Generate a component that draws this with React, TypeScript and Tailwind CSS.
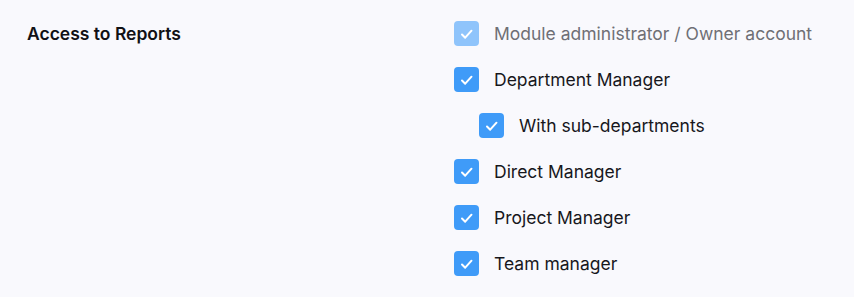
const Check = ({ disabled = false }: { disabled?: boolean }) => (
  <span
    className={`w-[25px] h-[25px] rounded-[4px] flex items-center justify-center shrink-0 ${
      disabled ? "bg-[#8fc4fb]" : "bg-[#3f9bf8]"
    }`}
  >
    <svg viewBox="0 0 24 24" className="w-6 h-6" fill="none" stroke="#ffffff" strokeWidth="2" strokeLinecap="round" strokeLinejoin="round">
      <path d="M7 12.5l3.2 3.2 6.3-7" />
    </svg>
  </span>
);

const Option = ({ label, disabled = false, nested = false }: { label: string; disabled?: boolean; nested?: boolean }) => (
  <label className={`flex items-center h-[25px] gap-[15px] ${nested ? "pl-[25px]" : ""}`}>
    <Check disabled={disabled} />
    <span className={`text-[17.5px] leading-6 ${disabled ? "text-[#6f6f75]" : "text-[#17171c]"}`}>{label}</span>
  </label>
);

export default function App() {
  return (
    <div className="w-[854px] h-[297px] bg-[#f9f9fd] font-['Inter',sans-serif] flex pt-[21px]">
      <div className="w-[454px] pl-[27px]">
        <h3 className="text-[17.5px] leading-[25px] font-semibold text-[#111115]">Access to Reports</h3>
      </div>
      <div className="flex flex-col gap-[21px]">
        <Option label="Module administrator / Owner account" disabled />
        <Option label="Department Manager" />
        <Option label="With sub-departments" nested />
        <Option label="Direct Manager" />
        <Option label="Project Manager" />
        <Option label="Team manager" />
      </div>
    </div>
  );
}
